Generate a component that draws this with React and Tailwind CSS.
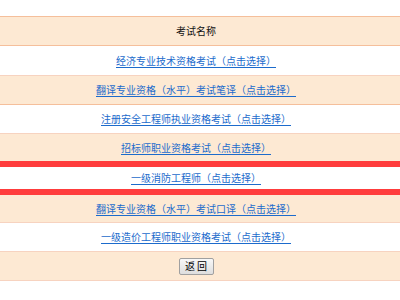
import React from "react";

const rows = [
  "经济专业技术资格考试（点击选择）",
  "翻译专业资格（水平）考试笔译（点击选择）",
  "注册安全工程师执业资格考试（点击选择）",
  "招标师职业资格考试（点击选择）",
];
const rows2 = [
  "翻译专业资格（水平）考试口译（点击选择）",
  "一级造价工程师职业资格考试（点击选择）",
];

function Link({ text }) {
  return (
    <a href="#" className="text-[#1c6bcc] underline underline-offset-[2px] decoration-[1px]">
      {text}
    </a>
  );
}

export default function App() {
  const font = { fontFamily: '"Noto Sans CJK SC", "Noto Sans", sans-serif' };
  return (
    <div className="w-[400px] h-[300px] bg-white text-[10px] leading-none" style={font}>
      <div className="h-[16px]" />
      <div className="border-t border-[#f5bf9b]">
        <div className="h-[29px] bg-[#fde9d3] flex items-center justify-center pr-2 border-b border-[#f5bf9b] text-[#111]">
          考试名称
        </div>
        <div className="h-[30px] bg-white flex items-center justify-center pr-2 border-b border-[#f7d3c0]">
          <Link text={rows[0]} />
        </div>
        <div className="h-[29px] bg-[#fde9d3] flex items-center justify-center pr-2 border-b border-[#f5bf9b]">
          <Link text={rows[1]} />
        </div>
        <div className="h-[29px] bg-white flex items-center justify-center pr-2 border-b border-[#f7d3c0]">
          <Link text={rows[2]} />
        </div>
        <div className="h-[27px] bg-[#fde9d3] flex items-center justify-center pr-2">
          <Link text={rows[3]} />
        </div>
        <div className="h-[34px] bg-white flex items-center justify-center pr-2 border-y-[6px] border-[#ff3c3c]">
          <Link text="一级消防工程师（点击选择）" />
        </div>
        <div className="h-[28px] bg-[#fde9d3] flex items-center justify-center pr-2 border-b border-[#f7d3c0]">
          <Link text={rows2[0]} />
        </div>
        <div className="h-[29px] bg-white flex items-center justify-center pr-2 border-b border-[#f7d3c0]">
          <Link text={rows2[1]} />
        </div>
        <div className="h-[29px] bg-[#fde9d3] flex items-center justify-center pr-2 border-b border-[#f7d3c0]">
          <button className="w-[35px] h-[17px] border border-[#a0a0a0] rounded-[2px] bg-gradient-to-b from-[#f8f8f8] to-[#dedede] text-black text-[10px] leading-none flex items-center justify-center">
            返 回
          </button>
        </div>
      </div>
    </div>
  );
}
